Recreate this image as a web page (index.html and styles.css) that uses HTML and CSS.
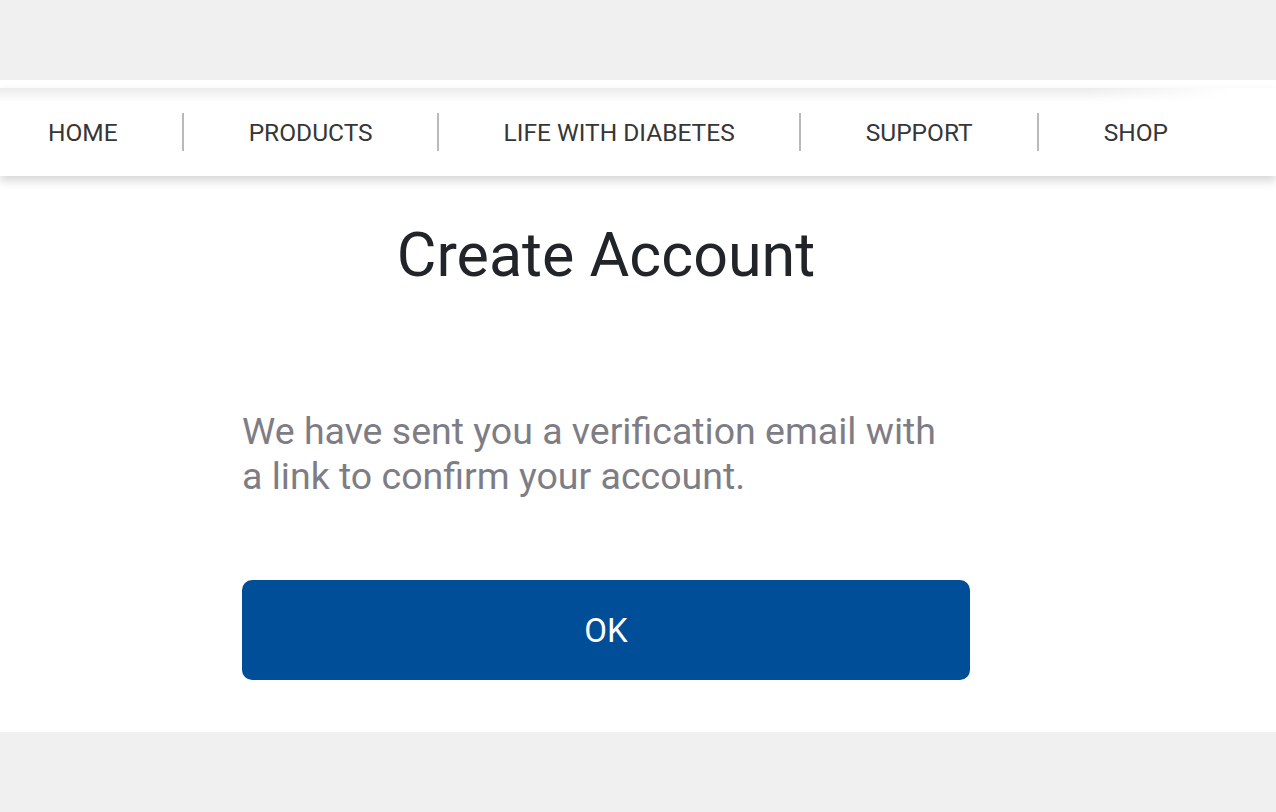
FILE: index.html
```html
<!DOCTYPE html>
<html lang="en">
<head>
<meta charset="utf-8">
<title>Create Account</title>
<link rel="stylesheet" href="styles.css">
</head>
<body>
<div class="topbar"></div>
<header class="header">
  <nav class="nav">
    <a class="nav-item first" href="#">HOME</a>
    <a class="nav-item" href="#">PRODUCTS</a>
    <a class="nav-item" href="#">LIFE WITH DIABETES</a>
    <a class="nav-item" href="#">SUPPORT</a>
    <a class="nav-item last" href="#">SHOP</a>
  </nav>
</header>
<main class="main">
  <div class="content">
    <h1 class="title">Create Account</h1>
    <p class="message">We have sent you a verification email with a link to confirm your account.</p>
    <button class="ok-btn" type="button">OK</button>
  </div>
</main>
</body>
</html>
```

FILE: styles.css
```css
html, body {
  margin: 0;
  padding: 0;
}
body {
  background: #f0f0f0;
  font-family: Roboto, "Liberation Sans", Arial, sans-serif;
}
.topbar {
  height: 80px;
  background: #f0f0f0;
}
.header {
  background: #ffffff;
  padding-top: 8px;
  position: relative;
  z-index: 2;
}
.nav {
  position: relative;
  height: 88px;
  display: flex;
  align-items: center;
  background: #ffffff;
  box-shadow: 0 5px 9px rgba(0, 0, 0, 0.16);
}
.nav::before {
  content: "";
  position: absolute;
  top: 0;
  left: 0;
  width: 1232px;
  height: 14px;
  background: linear-gradient(to bottom, rgba(0, 0, 0, 0.08), rgba(0, 0, 0, 0));
  -webkit-mask-image: linear-gradient(to right, #000 88%, transparent 100%);
  mask-image: linear-gradient(to right, #000 88%, transparent 100%);
  pointer-events: none;
}
.nav-item {
  display: block;
  height: 38px;
  line-height: 40px;
  padding: 0 64.5px;
  border-right: 2px solid #b9b9b9;
  color: #363636;
  font-size: 24.5px;
  text-decoration: none;
  white-space: nowrap;
}
.nav-item.first {
  padding-left: 48px;
}
.nav-item.last {
  border-right: none;
}
.main {
  background: #ffffff;
  padding: 42px 0 52px;
  position: relative;
  z-index: 1;
}
.content {
  width: 728px;
  margin-left: 242px;
}
.title {
  margin: 0;
  text-align: center;
  font-size: 61px;
  line-height: 74px;
  font-weight: 400;
  color: #212428;
}
.message {
  margin: 117px 0 0;
  max-width: 710px;
  font-size: 37.5px;
  line-height: 45px;
  color: #7e7d85;
}
.ok-btn {
  display: block;
  width: 100%;
  height: 100px;
  margin-top: 81px;
  border: none;
  border-radius: 10px;
  background: #004e97;
  color: #ffffff;
  font-family: Roboto, "Liberation Sans", Arial, sans-serif;
  font-size: 33px;
  cursor: pointer;
}
```
